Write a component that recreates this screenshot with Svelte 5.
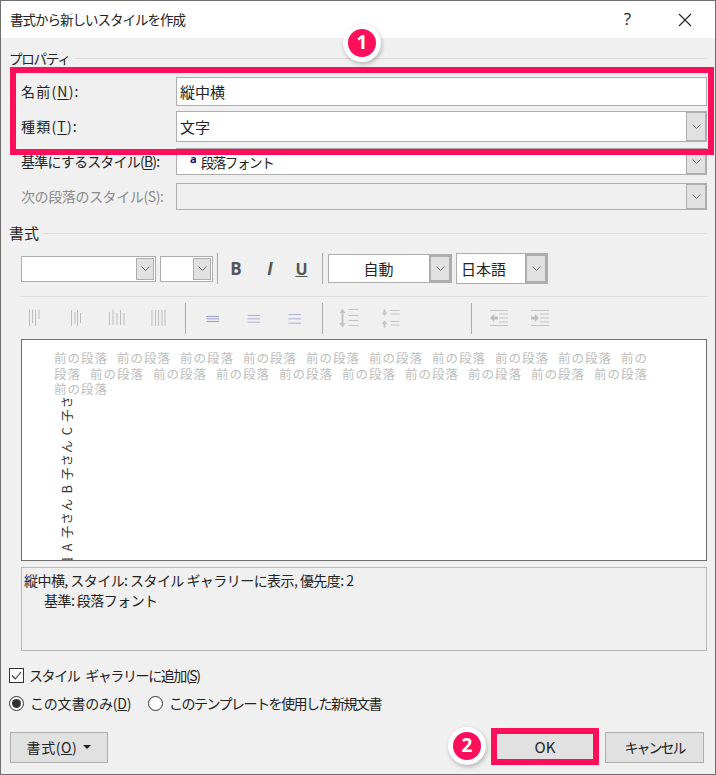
<script lang="ts">
  const alignCols = [
    [[6.5, 2.5, 19], [9.5, 2.5, 16], [12.5, 2.5, 19], [16, 2.5, 12]],
    [[7.5, 3, 19], [11, 5, 17], [13.5, 3, 19], [16.5, 6, 16]],
    [[4.5, 5, 18], [8, 2.5, 18], [12, 6, 18], [15.5, 3, 18], [19, 6, 18]],
    [[6, 3, 19], [9.5, 3, 19], [12.5, 3, 19], [16, 3, 19], [19, 3, 19]]
  ];
  const alignRows = [
    { ys: [9.5, 11.8, 14.5], color: '#a3a3d2' },
    { ys: [8.5, 11.8, 15.2], color: '#b4b4cf' },
    { ys: [7.5, 11.8, 16.2], color: '#b4b4cf' }
  ];
</script>

{#snippet chevron()}
  <svg class="chev" width="9" height="5" viewBox="0 0 9 5"><path d="M.5.5l4 4 4-4" fill="none" stroke="#666" stroke-width="1"/></svg>
{/snippet}

<div class="window">
  <header class="titlebar">
    <span class="title">書式から新しいスタイルを作成</span>
    <span class="help">?</span>
    <svg class="close" width="14" height="14" viewBox="0 0 14 14"><path d="M1 1l12 12M13 1L1 13" stroke="#222" stroke-width="1.1" fill="none"/></svg>
  </header>

  <main class="body">
    <div class="heading props-heading"><span>プロパティ</span><i></i></div>

    <div class="row name-row">
      <span class="label wide"><span>名前(<u>N</u>):</span></span>
      <div class="field"><span class="value">縦中横</span></div>
    </div>
    <div class="row type-row">
      <span class="label wide"><span>種類(<u>T</u>):</span></span>
      <div class="field"><span class="value">文字</span><b class="drop">{@render chevron()}</b></div>
    </div>
    <div class="row base-row">
      <span class="label narrow">基準にするスタイル(<u>B</u>):</span>
      <div class="field"><span class="para-a">a</span><span class="value para">段落フォント</span><b class="drop">{@render chevron()}</b></div>
    </div>
    <div class="row next-row">
      <span class="label narrow off">次の段落のスタイル(S):</span>
      <div class="field disabled"><b class="drop">{@render chevron()}</b></div>
    </div>

    <div class="heading format-heading"><span>書式</span><i></i></div>

    <div class="toolbar">
      <div class="field font-combo"><b class="drop">{@render chevron()}</b></div>
      <div class="field size-combo"><b class="drop">{@render chevron()}</b></div>
      <i class="sep sep-a"></i>
      <span class="tb bold">B</span>
      <span class="tb ital">I</span>
      <span class="tb under">U</span>
      <i class="sep sep-b"></i>
      <div class="field color-combo"><span class="auto">自動</span><b class="drop">{@render chevron()}</b></div>
      <div class="field lang-combo"><span class="lang">日本語</span><b class="drop">{@render chevron()}</b></div>
    </div>

    <hr class="rule" />

    <div class="iconbar">
      {#each alignCols as lines}
        <span class="cell">
          <svg width="24" height="24" viewBox="0 0 24 24">
            {#each lines as [x, y1, y2]}
              <path d="M{x} {y1}V{y2}" stroke="#bdbdbd" fill="none"/>
            {/each}
          </svg>
        </span>
      {/each}
      <i class="sep sep-c"></i>
      {#each alignRows as row}
        <span class="cell">
          <svg width="24" height="24" viewBox="0 0 24 24">
            {#each row.ys as y}
              <path d="M5.500 {y}H18" stroke={row.color} stroke-width="1.1" fill="none"/>
            {/each}
          </svg>
        </span>
      {/each}
      <i class="sep sep-d"></i>
      <span class="cell">
        <svg width="24" height="24" viewBox="0 0 24 24">
          <path d="M4.500 1.500L7.500 6H5.500v10h2l-3 4.500L1.500 16h2V6h-2z" fill="#c4c4c4"/>
          <path d="M10.500 2.500h10M10.500 8.500h10M10.500 13.500h10M10.500 18.500h10" stroke="#c4c4c4" fill="none"/>
        </svg>
      </span>
      <span class="cell">
        <svg width="24" height="24" viewBox="0 0 24 24">
          <path d="M4.500 2.500h2v3h2L5.500 9l-3-3.500h2zM5.500 13.500L8.500 17h-2v3.500h-2V17h-2z" fill="#c4c4c4"/>
          <path d="M11.500 3.500h9M11.500 7h9M11.500 14.500h9M11.500 18h9" stroke="#c4c4c4" fill="none"/>
        </svg>
      </span>
      <i class="sep sep-e"></i>
      <span class="cell">
        <svg width="24" height="24" viewBox="0 0 24 24">
          <path d="M3 3.500h18M12 7h9M12 11h9M12 15h9M3 18.500h18" stroke="#c4c4c4" fill="none"/>
          <path d="M3 11l4-4v2.500h4v3H7V15z" fill="#bdbdbd"/>
        </svg>
      </span>
      <span class="cell">
        <svg width="24" height="24" viewBox="0 0 24 24">
          <path d="M3 3.500h18M12 7h9M12 11h9M12 15h9M3 18.500h18" stroke="#c4c4c4" fill="none"/>
          <path d="M11 11L7 7v2.500H3v3h4V15z" fill="#bdbdbd"/>
        </svg>
      </span>
    </div>

    <section class="preview">
      <p class="prev-para">前の段落 前の段落 前の段落 前の段落 前の段落 前の段落 前の段落 前の段落 前の段落 前の段落 前の段落 前の段落 前の段落 前の段落 前の段落 前の段落 前の段落 前の段落 前の段落 前の段落</p>
      <div class="vert">目 A 子さん B 子さん C 子さ</div>
    </section>

    <section class="desc">
      <div>縦中横, スタイル: スタイル ギャラリーに表示, 優先度: 2</div>
      <div class="desc-indent">基準: 段落フォント</div>
    </section>

    <label class="check-row">
      <span class="checkbox">
        <svg width="13" height="13" viewBox="0 0 13 13"><path d="M2 6.500l3.300 3.500L11 3" fill="none" stroke="#333" stroke-width="1.100"/></svg>
      </span>
      <span>スタイル ギャラリーに追加(<u>S</u>)</span>
    </label>

    <div class="radio-row">
      <span class="radio on"></span>
      <span class="radio-a">この文書のみ(<u>D</u>)</span>
      <span class="radio"></span>
      <span class="radio-b">このテンプレートを使用した新規文書</span>
    </div>

    <footer class="actions">
      <div class="btn fmt"><span>書式(<u>O</u>)</span><svg class="caret" width="8" height="4" viewBox="0 0 8 4"><path d="M0 0h8L4 4z" fill="#222"/></svg></div>
      <div class="btn ok">
        OK
        <span class="mark"></span>
        <span class="badge badge-2">2</span>
      </div>
      <div class="btn cancel">キャンセル</div>
    </footer>
  </main>

  <span class="mark props-mark"></span>
  <span class="badge badge-1">1</span>
</div>

<style>
  :global(body) {
    margin: 0;
    background: #fff;
  }

  .window {
    position: relative;
    width: 716px;
    height: 775px;
    box-sizing: border-box;
    border: 1px solid #6f6f6f;
    background: #f0f0f0;
    color: #222;
    font-family: "Noto Sans CJK JP", "Noto Sans", sans-serif;
    font-size: 14px;
    line-height: 18px;
    overflow: hidden;
  }

  .titlebar {
    height: 37px;
    background: #fff;
    display: flex;
    align-items: center;
    padding: 0 23px 0 9px;
  }
  .title {
    font-size: 13.5px;
    letter-spacing: -1px;
    flex: 1;
    margin-bottom: 2px;
  }
  .help {
    font-size: 17px;
    margin-right: 47px;
    margin-bottom: 2px;
    font-family: "Open Sans", sans-serif;
  }

  .body {
    padding: 0 8px;
  }

  .heading {
    display: flex;
    align-items: center;
    height: 20px;
    gap: 4px;
  }
  .heading i {
    flex: 1;
    height: 1px;
    background: #dcdcdc;
  }
  .props-heading {
    margin-top: 10px;
  }
  .props-heading span {
    font-size: 13.5px;
    letter-spacing: -1.2px;
  }
  .format-heading {
    margin-top: 13px;
  }
  .format-heading span {
    font-size: 15px;
  }

  .row {
    display: grid;
    grid-template-columns: 155px 1fr;
    align-items: center;
    padding-left: 12px;
  }
  .name-row {
    margin-top: 9px;
    height: 29px;
  }
  .type-row {
    margin-top: 5px;
    height: 31px;
  }
  .base-row {
    margin-top: 6px;
    height: 27px;
  }
  .next-row {
    margin-top: 8px;
    height: 27px;
  }
  .row .field {
    height: 100%;
  }
  .label {
    margin-bottom: 1px;
  }
  .label u {
    text-underline-offset: 2px;
  }
  .wide {
    letter-spacing: 1.2px;
  }
  .narrow {
    letter-spacing: -0.8px;
    white-space: nowrap;
  }
  .off {
    color: #8a8a8a;
    letter-spacing: -0.4px;
  }

  .field {
    position: relative;
    box-sizing: border-box;
    display: flex;
    align-items: center;
    background: #fff;
    border: 1px solid #adadad;
  }
  .field.disabled {
    background: #f0f0f0;
  }
  .value {
    padding-left: 3px;
    font-size: 15px;
  }
  .value.para {
    padding-left: 4px;
    font-size: 13.5px;
    letter-spacing: -1.4px;
  }
  .para-a {
    margin-left: 13px;
    margin-bottom: 6px;
    font-family: "Open Sans", sans-serif;
    font-weight: 700;
    font-size: 11px;
    line-height: 12px;
    color: #0a0a7a;
  }
  .drop {
    position: absolute;
    top: 0;
    right: 0;
    bottom: 0;
    width: 20px;
    box-sizing: border-box;
    display: flex;
    align-items: center;
    justify-content: center;
    background: #e1e1e1;
    border: 1px solid #adadad;
    font-weight: 400;
  }

  .toolbar {
    margin-top: 10px;
    height: 31px;
    padding-left: 12px;
    display: flex;
    align-items: center;
  }
  .font-combo {
    width: 135px;
    height: 26px;
  }
  .size-combo {
    width: 53px;
    height: 26px;
    margin-left: 4px;
  }
  .font-combo .drop,
  .size-combo .drop {
    top: 1px;
    bottom: 1px;
    right: 1px;
    width: 18px;
  }
  .sep {
    flex: none;
    display: block;
    width: 1px;
    background: #a9a9a9;
    height: 31px;
  }
  .sep-a {
    margin: 0 0 0 4px;
  }
  .tb {
    flex: none;
    width: 32px;
    text-align: center;
    font-family: "Open Sans", sans-serif;
    font-size: 17px;
    color: #555;
    font-weight: 700;
  }
  .bold {
    margin-left: 1px;
    width: 34px;
  }
  .ital {
    font-style: italic;
    font-size: 17px;
    width: 34px;
  }
  .under {
    text-decoration: underline;
    font-size: 16px;
    width: 29px;
    margin-right: 6px;
  }
  .color-combo {
    width: 124px;
    height: 29px;
    margin-left: 5px;
    justify-content: center;
    padding-right: 23px;
  }
  .auto {
    font-size: 15px;
  }
  .lang-combo {
    width: 92px;
    height: 31px;
    margin-left: 4px;
  }
  .lang {
    padding-left: 4px;
    font-size: 15px;
  }
  .color-combo .drop,
  .lang-combo .drop {
    width: 22px;
    border-width: 2px;
  }

  .rule {
    margin: 12px 0 0 12px;
    border: 0;
    height: 1px;
    background: #dcdcdc;
  }

  .iconbar {
    margin-top: 6px;
    height: 31px;
    padding-left: 5px;
    display: flex;
    align-items: center;
  }
  .cell {
    flex: none;
    width: 41px;
    height: 24px;
    display: flex;
    justify-content: center;
  }
  .cell svg {
    display: block;
  }
  .sep-c {
    margin: 0 6px 0 7px;
  }
  .sep-d {
    margin: 0 6px 0 7px;
  }
  .sep-e {
    margin: 0 6px 0 60px;
  }

  .preview {
    margin: 5px 0 0 12px;
    height: 222px;
    box-sizing: border-box;
    border: 1px solid #6f6f6f;
    background: #fff;
    overflow: hidden;
    padding: 10px 0 0 32px;
  }
  .prev-para {
    margin: 0;
    width: 597px;
    color: #bdbdbd;
    font-size: 12.5px;
    letter-spacing: 1px;
    line-height: 15.5px;
    word-spacing: 5.2px;
  }
  .vert {
    writing-mode: vertical-rl;
    text-orientation: sideways;
    transform: rotate(180deg);
    height: 172px;
    width: 18px;
    margin-left: 4px;
    white-space: nowrap;
    font-size: 12.5px;
    letter-spacing: 1px;
    line-height: 18px;
    word-spacing: 0.5px;
    color: #333;
  }

  .desc {
    margin: 6px 0 0 12px;
    height: 84px;
    box-sizing: border-box;
    border: 1px solid #b9b9b9;
    padding: 2px 2px;
    line-height: 20px;
    letter-spacing: -0.55px;
  }
  .desc-indent {
    padding-left: 20px;
  }

  .check-row {
    margin-top: 15px;
    height: 18px;
    display: flex;
    align-items: center;
    gap: 5px;
    letter-spacing: -1.4px;
    word-spacing: 4px;
  }
  .checkbox {
    flex: none;
    box-sizing: border-box;
    width: 15px;
    height: 15px;
    border: 1px solid #333;
    background: #fff;
    display: flex;
    align-items: center;
    justify-content: center;
  }

  .radio-row {
    margin-top: 10px;
    height: 18px;
    display: flex;
    align-items: center;
  }
  .radio {
    flex: none;
    position: relative;
    box-sizing: border-box;
    width: 15px;
    height: 15px;
    border: 1px solid #333;
    border-radius: 50%;
    background: #fff;
  }
  .radio.on::after {
    content: "";
    position: absolute;
    inset: 2px;
    border-radius: 50%;
    background: #333;
  }
  .radio-a {
    margin-left: 6px;
    width: 118px;
    letter-spacing: -0.2px;
  }
  .radio-b {
    margin-left: 6px;
    letter-spacing: -1.5px;
  }

  .actions {
    margin-top: 20px;
    display: flex;
    align-items: center;
  }
  .btn {
    position: relative;
    box-sizing: border-box;
    height: 31px;
    padding-bottom: 1px;
    display: flex;
    align-items: center;
    justify-content: center;
    background: #e1e1e1;
    border: 1px solid #adadad;
  }
  .fmt {
    width: 98px;
    margin-left: 1px;
    gap: 5px;
    letter-spacing: 0.6px;
  }
  .caret {
    margin-left: 1px;
  }
  .ok {
    width: 100px;
    margin-left: 387px;
    font-size: 15px;
  }
  .cancel {
    width: 99px;
    margin-left: 10px;
    letter-spacing: -2px;
  }

  .mark {
    position: absolute;
    box-sizing: border-box;
    border: 6px solid #fe0f5c;
  }
  .props-mark {
    left: 9px;
    top: 66px;
    width: 704px;
    height: 88px;
  }
  .ok .mark {
    inset: -5px -5px -3px -5px;
  }

  .badge {
    position: absolute;
    box-sizing: border-box;
    width: 38px;
    height: 38px;
    border: 5px solid #fff;
    border-radius: 50%;
    background: #fe0f5c;
    color: #fff;
    font-family: "Open Sans", sans-serif;
    font-weight: 700;
    font-size: 19px;
    line-height: 27px;
    text-align: center;
    box-shadow: 1px 2px 4px rgba(0, 0, 0, 0.25);
  }
  .badge-1 {
    left: 342px;
    top: 23px;
  }
  .badge-2 {
    left: -48px;
    top: -6px;
  }
  .chev {
    display: block;
  }
</style>
